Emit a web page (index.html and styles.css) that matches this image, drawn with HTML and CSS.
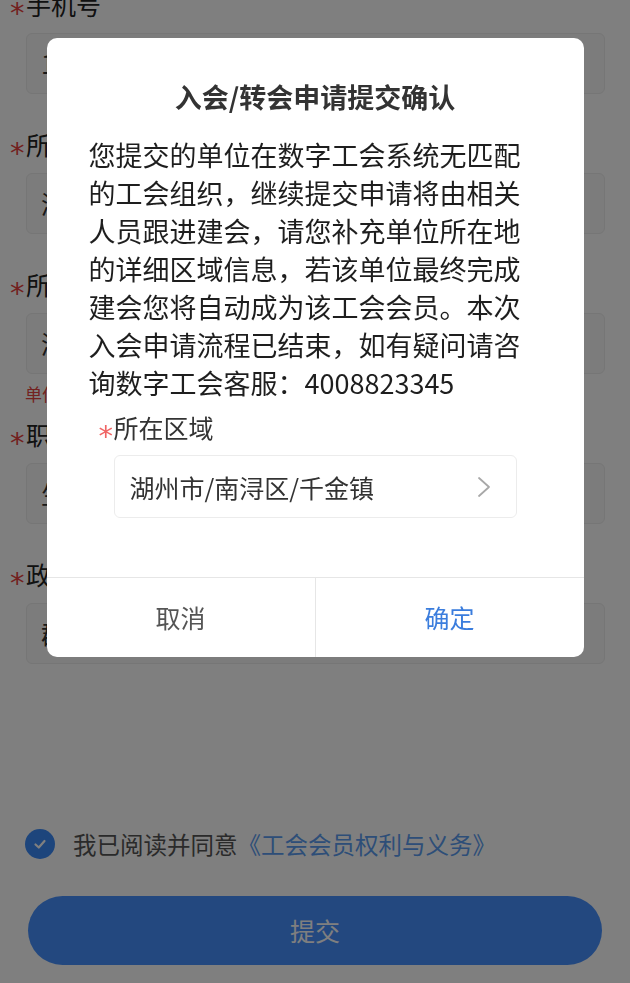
FILE: index.html
```html
<!DOCTYPE html>
<html lang="zh-CN">

<head>
    <meta charset="UTF-8">
    <meta name="viewport" content="width=device-width, initial-scale=1.0">
    <title>入会申请</title>
    <link rel="stylesheet" href="styles.css">
</head>

<body>

    <!-- 表单页面（被遮罩盖住） -->
    <div id="form-page">
        <div class="field">
            <div class="field-label"><span class="required">*</span>手机号</div>
            <div class="field-input">13857201234</div>
        </div>
        <div class="field">
            <div class="field-label"><span class="required">*</span>所在单位</div>
            <div class="field-input">浙江某某科技有限公司</div>
        </div>
        <div class="field">
            <div class="field-label"><span class="required">*</span>所属区域</div>
            <div class="field-input">浙江省/湖州市/南浔区</div>
            <div class="field-hint">单位所在地区请以营业执照为准</div>
        </div>
        <div class="field after-hint">
            <div class="field-label"><span class="required">*</span>职业</div>
            <div class="field-input">生产制造人员</div>
        </div>
        <div class="field">
            <div class="field-label"><span class="required">*</span>政治面貌</div>
            <div class="field-input">群众</div>
        </div>

        <!-- 协议勾选 -->
        <div class="agree-row">
            <span class="check-circle">
                <svg width="16" height="16" viewBox="0 0 16 16">
                    <polyline points="3.5,8.5 6.8,11.5 12.5,5" fill="none" stroke="#fff" stroke-width="2.2"
                        stroke-linecap="round" stroke-linejoin="round" />
                </svg>
            </span>
            <span class="agree-text">我已阅读并同意<a href="#">《工会会员权利与义务》</a></span>
        </div>

        <div class="submit-btn">提交</div>
    </div>

    <!-- 遮罩层 + 确认弹窗 -->
    <div id="mask">
        <div class="dialog">
            <h2 class="dialog-title">入会/转会申请提交确认</h2>
            <p class="dialog-text">您提交的单位在数字工会系统无匹配的工会组织，继续提交申请将由相关人员跟进建会，请您补充单位所在地的详细区域信息，若该单位最终完成建会您将自动成为该工会会员。本次入会申请流程已结束，如有疑问请咨询数字工会客服：4008823345</p>

            <div class="area-field">
                <div class="area-label"><span class="required">*</span>所在区域</div>
                <div class="area-input">
                    <span>湖州市/南浔区/千金镇</span>
                    <svg width="14" height="22" viewBox="0 0 14 22">
                        <polyline points="2,2 12,11 2,20" fill="none" stroke="#a8a8a8" stroke-width="1.8"
                            stroke-linecap="round" stroke-linejoin="round" />
                    </svg>
                </div>
            </div>

            <div class="dialog-footer">
                <div class="dialog-btn cancel">取消</div>
                <div class="dialog-btn confirm">确定</div>
            </div>
        </div>
    </div>

</body>

</html>
```

FILE: styles.css
```css
/* 通用样式 */
html,
body {
    margin: 0;
    padding: 0;
    width: 100%;
    height: 100%;
    overflow: hidden;
}

body {
    font-family: "Noto Sans CJK SC", "Noto Sans", sans-serif;
    background-color: #fff;
}

/* 表单页面 */
#form-page {
    padding: 0 25px 0 26px;
    margin-top: -14px;
}

.field + .field {
    margin-top: 32px;
}

.field.after-hint {
    margin-top: 10px;
}

.field-label {
    height: 36px;
    margin-left: -16px;
    font-size: 25px;
    line-height: 36px;
    color: #222;
}

/* 必填星号 */
.required {
    display: inline-block;
    width: 16px;
    color: #e64340;
    font-family: "DejaVu Sans", sans-serif;
    font-size: 29px;
    line-height: 10px;
    vertical-align: -8px;
}

.field-input {
    margin-top: 11px;
    height: 61px;
    box-sizing: border-box;
    padding: 0 14px;
    border: 1px solid #ececec;
    border-radius: 6px;
    background-color: #f8f8f8;
    font-size: 25px;
    line-height: 59px;
    color: #333;
    white-space: nowrap;
    overflow: hidden;
}

.field-hint {
    margin-top: 8px;
    margin-left: -1px;
    font-size: 17px;
    line-height: 24px;
    color: #e64340;
}

/* 协议勾选 */
.agree-row {
    display: flex;
    align-items: center;
    margin-top: 165px;
    margin-left: -1px;
}

.check-circle {
    display: flex;
    align-items: center;
    justify-content: center;
    width: 30px;
    height: 30px;
    border-radius: 50%;
    background-color: #3a8af8;
}

.agree-text {
    margin-left: 18px;
    font-size: 23.5px;
    line-height: 30px;
    color: #555;
}

.agree-text a {
    color: #5b9cf0;
    text-decoration: none;
}

/* 提交按钮 */
.submit-btn {
    margin: 37px 3px 0 2px;
    height: 69px;
    border-radius: 35px;
    background-color: #4690fe;
    color: #fff;
    font-size: 25px;
    line-height: 69px;
    text-align: center;
}

/* 遮罩层 */
#mask {
    position: fixed;
    top: 0;
    left: 0;
    right: 0;
    bottom: 0;
    background-color: rgba(0, 0, 0, 0.5);
    display: flex;
    justify-content: center;
    align-items: flex-start;
    padding-top: 38px;
}

/* 弹窗 */
.dialog {
    width: 537px;
    background-color: #fff;
    border-radius: 10px;
    overflow: hidden;
}

.dialog-title {
    margin: 0;
    padding-top: 41px;
    font-size: 27px;
    line-height: 36px;
    font-weight: 700;
    text-align: center;
    color: #333;
}

.dialog-text {
    margin: 21px 42px 0;
    font-size: 27px;
    line-height: 38px;
    color: #1e1e1e;
}

.area-field {
    margin-top: 7px;
    padding: 0 67px;
}

.area-label {
    height: 36px;
    margin-left: -15px;
    font-size: 25px;
    line-height: 36px;
    color: #333;
}

.area-label .required {
    width: 15px;
    color: #f06464;
}

.area-input {
    display: flex;
    align-items: center;
    justify-content: space-between;
    margin-top: 10px;
    height: 63px;
    box-sizing: border-box;
    padding: 0 25px 0 15px;
    border: 1px solid #ececec;
    border-radius: 6px;
    font-size: 25px;
    color: #333;
}

.dialog-footer {
    display: flex;
    margin-top: 59px;
    border-top: 1px solid #e6e6e6;
}

.dialog-btn {
    flex: 1;
    height: 79px;
    line-height: 79px;
    font-size: 25px;
    text-align: center;
}

.cancel {
    color: #555;
    border-right: 1px solid #e6e6e6;
}

.confirm {
    color: #3b7ddd;
}
```
